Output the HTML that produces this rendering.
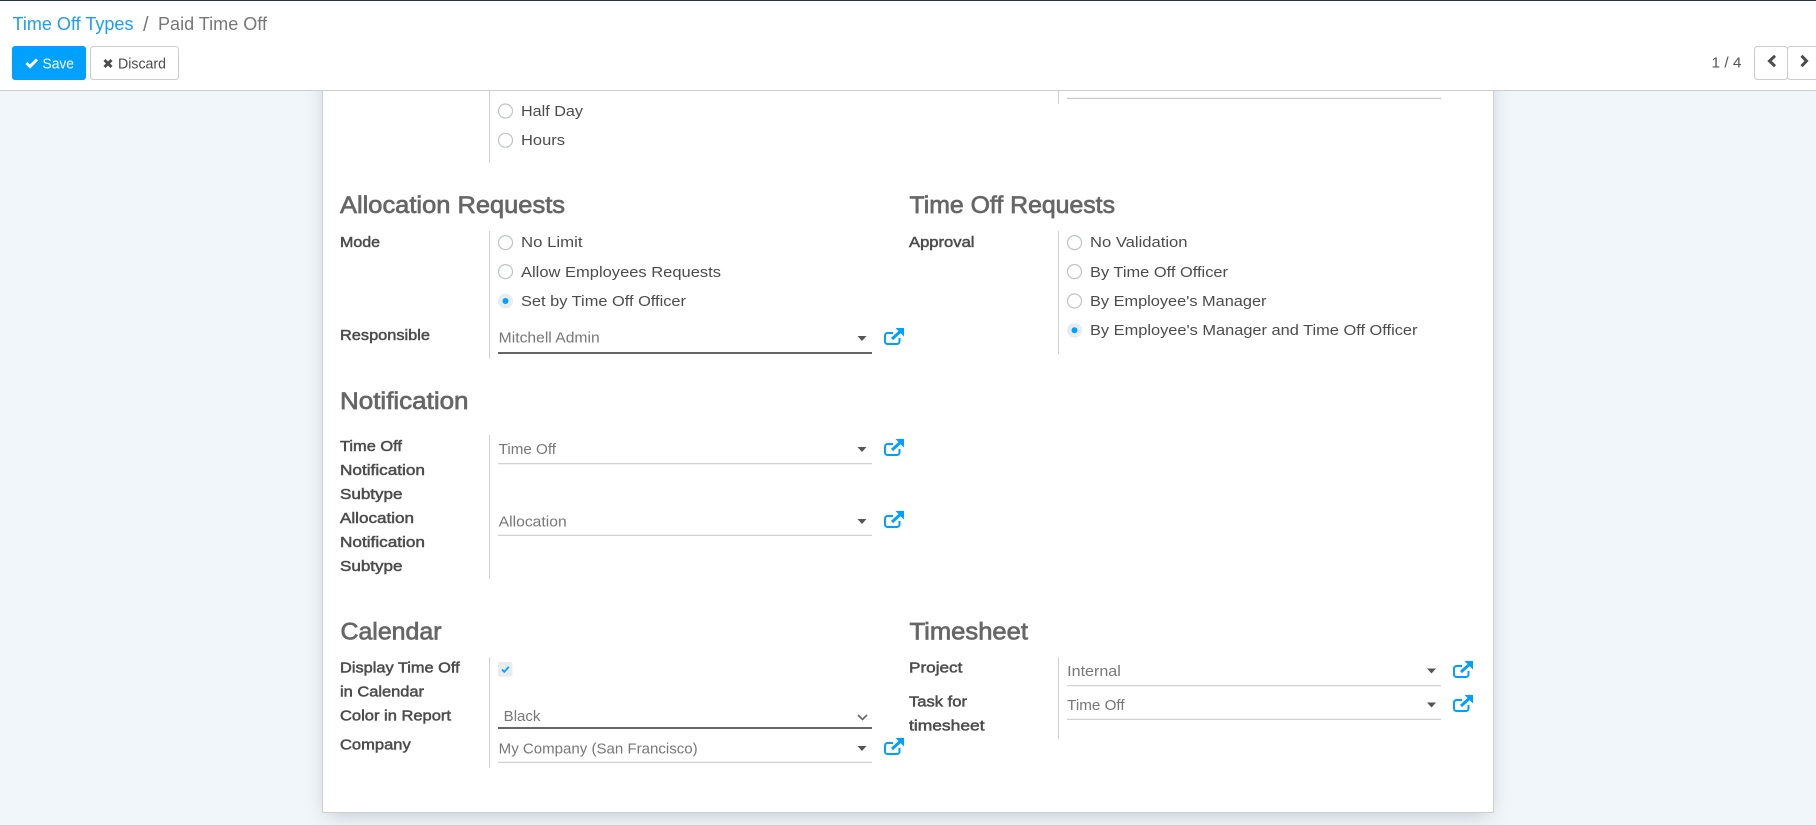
<!DOCTYPE html>
<html><head><meta charset="utf-8"><title>Paid Time Off</title>
<style>
html,body{margin:0;padding:0;width:1816px;height:826px;overflow:hidden;background:#f1f6fa}
#card{position:absolute;left:322px;top:60px;width:1170px;height:751px;background:#fff;border:1px solid #d0d0d0;box-shadow:0 6px 20px -6px rgba(90,100,115,.38)}
#bl{position:absolute;left:0;top:825px;width:1816px;height:1px;background:#ccc}
svg{position:absolute;left:0;top:0}
text{font-family:"Liberation Sans",sans-serif;font-size:15.2px;fill:#4c4c4c}
.l{stroke:#4c4c4c;stroke-width:.5px}
.h{font-size:24px;fill:#666;stroke:#666;stroke-width:.7px}
.v{fill:#777;font-size:14.6px}
.r{fill:#fff;stroke:#bfc3c7;stroke-width:1.2}
.rc{fill:#e9ecef}
.rd{fill:#00a0ff}
.vl{stroke:#d0d0d0;stroke-width:1}
.u{stroke:#ccc;stroke-width:1.2}
.ud{stroke:#666;stroke-width:2}
</style></head><body>
<div id="card"></div><div id="bl"></div>
<svg width="1816" height="826" viewBox="0 0 1816 826" xmlns="http://www.w3.org/2000/svg">
<defs>
<g id="ext">
<path d="M9 5H3.5a2.5 2.5 0 0 0-2.5 2.5V13.5a2.5 2.5 0 0 0 2.5 2.5H13a2.5 2.5 0 0 0 2.5-2.5V10" fill="none" stroke="#00a0ff" stroke-width="2"/>
<path d="M8 11L16 3.8" fill="none" stroke="#00a0ff" stroke-width="3"/>
<path d="M11.5 0H20V8.5Z" fill="#00a0ff"/>
</g>
<path id="caret" d="M0 0H9L4.5 5Z" fill="#555"/>
</defs>

<!-- header -->
<rect x="0" y="0" width="1816" height="90" fill="#fff"/>
<rect x="0" y="0" width="1816" height="1" fill="#243742"/>
<rect x="0" y="90" width="1816" height="1" fill="#ccc"/>
<text x="12.5" y="30" style="font-size:18px;fill:#1f9df0" textLength="121" lengthAdjust="spacingAndGlyphs">Time Off Types</text>
<text x="143" y="31" style="font-size:20px;fill:#777">/</text>
<text x="158" y="30" style="font-size:18px;fill:#777" textLength="109" lengthAdjust="spacingAndGlyphs">Paid Time Off</text>

<rect x="12" y="46" width="74" height="34" rx="3" fill="#00a0ff"/>
<path d="M26.5 63L30 66.5L37 59.5" fill="none" stroke="#fff" stroke-width="3"/>
<text x="42.5" y="68.5" style="fill:#fff;font-size:14.6px" textLength="31.5" lengthAdjust="spacingAndGlyphs">Save</text>
<rect x="90.5" y="46.5" width="88" height="33" rx="3" fill="#fff" stroke="#ccc"/>
<path d="M104.5 60L111.5 67M111.5 60L104.5 67" fill="none" stroke="#4c4c4c" stroke-width="3"/>
<text x="118" y="68.5" style="font-size:14.6px" textLength="48" lengthAdjust="spacingAndGlyphs">Discard</text>

<text x="1711.5" y="67.5" style="fill:#555;font-size:14.6px" textLength="30" lengthAdjust="spacingAndGlyphs">1 / 4</text>
<rect x="1754.5" y="46.5" width="33" height="33" rx="3" fill="#fff" stroke="#ccc"/>
<rect x="1787.5" y="46.5" width="40" height="33" rx="3" fill="#fff" stroke="#ccc"/>
<path d="M1775 55.8L1769.5 61L1775 66.2" fill="none" stroke="#4c4c4c" stroke-width="3"/>
<path d="M1801.5 55.8L1806.5 61L1801.5 66.2" fill="none" stroke="#4c4c4c" stroke-width="3"/>

<!-- top fragment -->
<line class="vl" x1="489.5" y1="91" x2="489.5" y2="163"/>
<circle class="r" cx="505.5" cy="111" r="7"/>
<text x="521" y="116" textLength="62" lengthAdjust="spacingAndGlyphs">Half Day</text>
<circle class="r" cx="505.5" cy="140.3" r="7"/>
<text x="521" y="145" textLength="44" lengthAdjust="spacingAndGlyphs">Hours</text>
<line class="vl" x1="1058.5" y1="91" x2="1058.5" y2="104"/>
<line class="u" x1="1067" y1="98.4" x2="1441" y2="98.4"/>

<!-- allocation requests -->
<text class="h" x="340" y="213" textLength="225" lengthAdjust="spacingAndGlyphs">Allocation Requests</text>
<text class="l" x="340" y="247" textLength="40" lengthAdjust="spacingAndGlyphs">Mode</text>
<text class="l" x="340" y="340" textLength="90" lengthAdjust="spacingAndGlyphs">Responsible</text>
<line class="vl" x1="489.5" y1="231" x2="489.5" y2="359"/>
<circle class="r" cx="505.5" cy="242.6" r="7"/>
<text x="521" y="247" textLength="61.5" lengthAdjust="spacingAndGlyphs">No Limit</text>
<circle class="r" cx="505.5" cy="271.6" r="7"/>
<text x="521" y="277" textLength="200" lengthAdjust="spacingAndGlyphs">Allow Employees Requests</text>
<circle class="rc" cx="505.5" cy="301" r="7.5"/><circle class="rd" cx="505.5" cy="301" r="3"/>
<text x="521" y="306" textLength="165" lengthAdjust="spacingAndGlyphs">Set by Time Off Officer</text>
<text class="v" x="498.7" y="342.7" textLength="101" lengthAdjust="spacingAndGlyphs">Mitchell Admin</text>
<use href="#caret" x="857.5" y="336"/>
<line class="ud" x1="498" y1="353" x2="872" y2="353"/>
<use href="#ext" x="884" y="328"/>

<!-- time off requests -->
<text class="h" x="909.5" y="213" textLength="205.5" lengthAdjust="spacingAndGlyphs">Time Off Requests</text>
<text class="l" x="909" y="247" textLength="65.5" lengthAdjust="spacingAndGlyphs">Approval</text>
<line class="vl" x1="1058.5" y1="231" x2="1058.5" y2="354"/>
<circle class="r" cx="1074.5" cy="242.6" r="7"/>
<text x="1090" y="247" textLength="97.5" lengthAdjust="spacingAndGlyphs">No Validation</text>
<circle class="r" cx="1074.5" cy="271.6" r="7"/>
<text x="1090" y="277" textLength="138" lengthAdjust="spacingAndGlyphs">By Time Off Officer</text>
<circle class="r" cx="1074.5" cy="301" r="7"/>
<text x="1090" y="306" textLength="176.5" lengthAdjust="spacingAndGlyphs">By Employee's Manager</text>
<circle class="rc" cx="1074.5" cy="330.3" r="7.5"/><circle class="rd" cx="1074.5" cy="330.3" r="3"/>
<text x="1090" y="335" textLength="327.5" lengthAdjust="spacingAndGlyphs">By Employee's Manager and Time Off Officer</text>

<!-- notification -->
<text class="h" x="340" y="409" textLength="128.5" lengthAdjust="spacingAndGlyphs">Notification</text>
<text class="l" x="340" y="451" textLength="62" lengthAdjust="spacingAndGlyphs">Time Off</text>
<text class="l" x="340" y="475" textLength="85" lengthAdjust="spacingAndGlyphs">Notification</text>
<text class="l" x="340" y="499" textLength="62.5" lengthAdjust="spacingAndGlyphs">Subtype</text>
<text class="l" x="340" y="523" textLength="74" lengthAdjust="spacingAndGlyphs">Allocation</text>
<text class="l" x="340" y="547" textLength="85" lengthAdjust="spacingAndGlyphs">Notification</text>
<text class="l" x="340" y="571" textLength="62.5" lengthAdjust="spacingAndGlyphs">Subtype</text>
<line class="vl" x1="489.5" y1="435" x2="489.5" y2="579"/>
<text class="v" x="498.7" y="454" textLength="57.3" lengthAdjust="spacingAndGlyphs">Time Off</text>
<use href="#caret" x="857.5" y="447"/>
<line class="u" x1="498" y1="463.7" x2="872" y2="463.7"/>
<use href="#ext" x="884" y="439"/>
<text class="v" x="498.7" y="526.3" textLength="68" lengthAdjust="spacingAndGlyphs">Allocation</text>
<use href="#caret" x="857.5" y="519"/>
<line class="u" x1="498" y1="535.3" x2="872" y2="535.3"/>
<use href="#ext" x="884" y="511"/>

<!-- calendar -->
<text class="h" x="340.5" y="639.3" textLength="101" lengthAdjust="spacingAndGlyphs">Calendar</text>
<text class="l" x="340" y="672.7" textLength="119.7" lengthAdjust="spacingAndGlyphs">Display Time Off</text>
<text class="l" x="340" y="696.7" textLength="84" lengthAdjust="spacingAndGlyphs">in Calendar</text>
<text class="l" x="340" y="720.7" textLength="111" lengthAdjust="spacingAndGlyphs">Color in Report</text>
<text class="l" x="340" y="749.3" textLength="70.7" lengthAdjust="spacingAndGlyphs">Company</text>
<line class="vl" x1="489.5" y1="657" x2="489.5" y2="768"/>
<rect x="498" y="662" width="14.5" height="14.7" rx="2.5" fill="#e9ecef"/>
<path d="M502 669.5L504.3 671.8L508.8 666.8" fill="none" stroke="#00a0ff" stroke-width="1.8"/>
<text class="v" x="503.7" y="721" textLength="36.7" lengthAdjust="spacingAndGlyphs">Black</text>
<path d="M858 715L862.5 719.5L867 715" fill="none" stroke="#666" stroke-width="1.6"/>
<line class="ud" x1="498" y1="728" x2="872" y2="728"/>
<text class="v" x="498.7" y="753.3" textLength="199" lengthAdjust="spacingAndGlyphs">My Company (San Francisco)</text>
<use href="#caret" x="857.5" y="746"/>
<line class="u" x1="498" y1="762.3" x2="872" y2="762.3"/>
<use href="#ext" x="884" y="738"/>

<!-- timesheet -->
<text class="h" x="909.5" y="639.3" textLength="118.5" lengthAdjust="spacingAndGlyphs">Timesheet</text>
<text class="l" x="909" y="672.7" textLength="53.4" lengthAdjust="spacingAndGlyphs">Project</text>
<text class="l" x="909" y="706.7" textLength="58" lengthAdjust="spacingAndGlyphs">Task for</text>
<text class="l" x="909" y="730.7" textLength="75.6" lengthAdjust="spacingAndGlyphs">timesheet</text>
<line class="vl" x1="1058.5" y1="657" x2="1058.5" y2="739"/>
<text class="v" x="1067.2" y="676" textLength="53.6" lengthAdjust="spacingAndGlyphs">Internal</text>
<use href="#caret" x="1427" y="668.5"/>
<line class="u" x1="1067" y1="685.7" x2="1441" y2="685.7"/>
<use href="#ext" x="1453" y="661"/>
<text class="v" x="1067.2" y="710" textLength="57.4" lengthAdjust="spacingAndGlyphs">Time Off</text>
<use href="#caret" x="1427" y="702.5"/>
<line class="u" x1="1067" y1="719.3" x2="1441" y2="719.3"/>
<use href="#ext" x="1453" y="695"/>
</svg>
</body></html>
